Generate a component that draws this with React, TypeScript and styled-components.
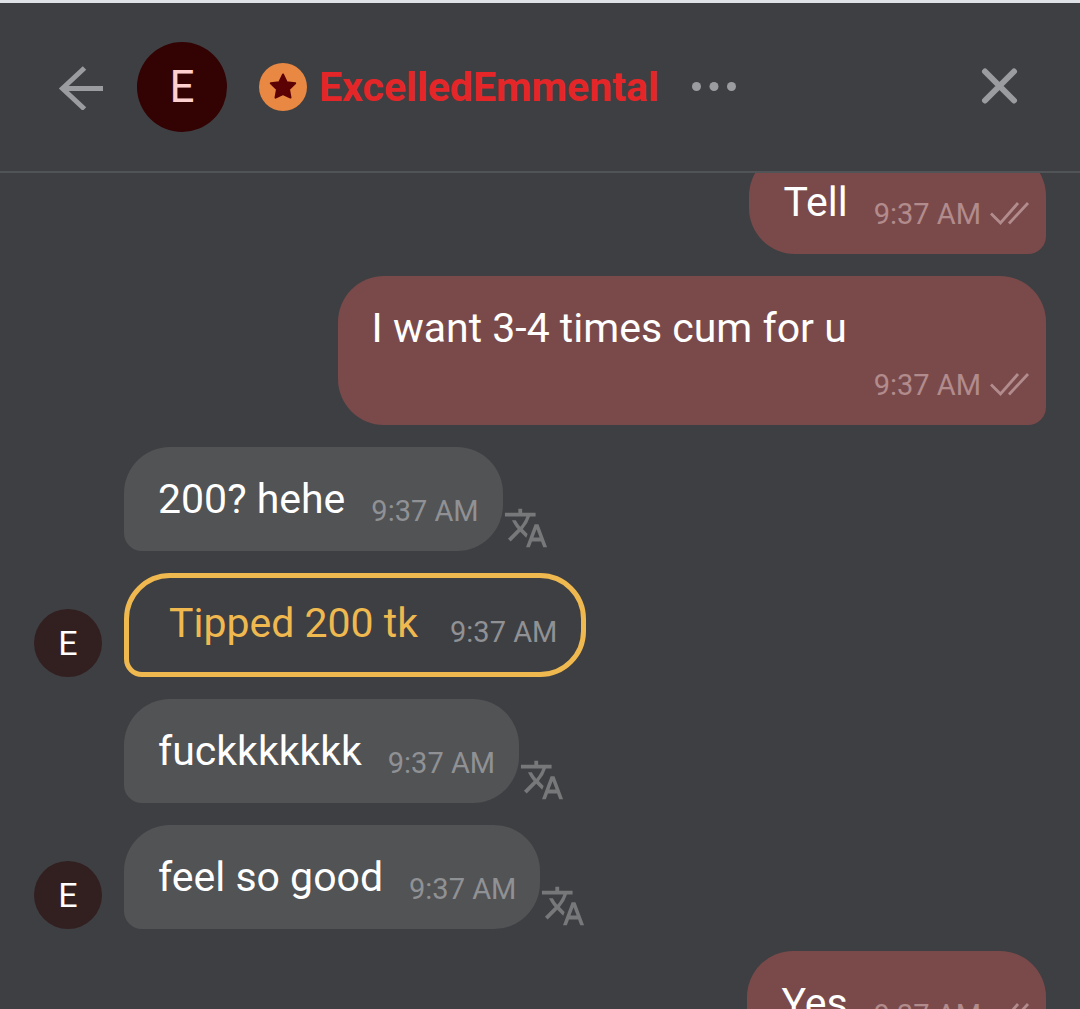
import { useLayoutEffect, useRef } from "react";
import styled, { createGlobalStyle } from "styled-components";
import { MdTranslate } from "react-icons/md";

const color = {
  page: "#3e3f42",
  strip: "#dfe3e8",
  line: "#515457",
  icon: "#9b9ca0",
  sent: "#7a4a4b",
  received: "#525355",
  tip: "#f0b94f",
};

const GlobalStyle = createGlobalStyle`
  * { box-sizing: border-box; }
  body {
    margin: 0;
    background: ${color.page};
    font-family: Roboto, "Liberation Sans", sans-serif;
  }
`;

const Screen = styled.main`
  display: flex;
  flex-direction: column;
  height: 100vh;
  border-top: 3px solid ${color.strip};
`;

const Header = styled.header`
  display: flex;
  align-items: center;
  flex: none;
  height: 170px;
  padding: 0 60px 0 58px;
  border-bottom: 2px solid ${color.line};
`;

const IconButton = styled.button`
  display: flex;
  flex: none;
  padding: 0;
  border: 0;
  background: none;
  color: ${color.icon};
  cursor: pointer;
`;

const CloseButton = styled(IconButton)`
  margin-left: auto;
`;

const Avatar = styled.span<{ $large?: boolean }>`
  display: flex;
  flex: none;
  align-items: center;
  justify-content: center;
  width: ${(p) => (p.$large ? 90 : 68)}px;
  height: ${(p) => (p.$large ? 90 : 68)}px;
  border-radius: 50%;
  background: ${(p) => (p.$large ? "#330203" : "#321f20")};
  color: ${(p) => (p.$large ? "#ffd0d0" : "#ffffff")};
  font-size: ${(p) => (p.$large ? 44 : 34)}px;
`;

const HeaderAvatar = styled(Avatar)`
  margin: 0 32px 0 33px;
`;

const UserName = styled.h1`
  margin: 0 32px 0 12px;
  color: #e52629;
  font-size: 41px;
  font-weight: 700;
  line-height: 48px;
`;

const Messages = styled.ol`
  display: flex;
  flex: 1;
  flex-direction: column;
  gap: 22px;
  min-height: 0;
  margin: 0;
  padding: 0 34px 22px;
  overflow-y: auto;
  scrollbar-width: none;
  list-style: none;
`;

const Row = styled.li<{ $sent?: boolean }>`
  display: flex;
  flex: none;
  align-items: flex-end;
  justify-content: ${(p) => (p.$sent ? "flex-end" : "flex-start")};
`;

const AvatarSlot = styled.span`
  display: flex;
  flex: none;
  width: 90px;
`;

const Bubble = styled.div`
  display: flex;
  flex-wrap: wrap;
  align-items: flex-end;
  gap: 9px 26px;
  max-width: 70%;
  min-height: 104px;
`;

const SentBubble = styled(Bubble)<{ $wide?: boolean }>`
  width: ${(p) => (p.$wide ? "70%" : "auto")};
  padding: 22px 16px 22px 34px;
  border-radius: 46px 46px 18px 46px;
  background: ${color.sent};
`;

const ReceivedBubble = styled(Bubble)`
  padding: 22px 24px 22px 34px;
  border-radius: 46px 46px 46px 18px;
  background: ${color.received};
`;

const TipBubble = styled(Bubble)`
  column-gap: 32px;
  padding: 18px 24px 22px 40px;
  border: 5px solid ${color.tip};
  border-radius: 46px 46px 46px 18px;
`;

const Text = styled.p<{ $tip?: boolean; $wide?: boolean }>`
  flex-basis: ${(p) => (p.$wide ? "100%" : "auto")};
  margin: 0;
  color: ${(p) => (p.$tip ? color.tip : "#ffffff")};
  font-size: 41px;
  line-height: ${(p) => (p.$tip ? 54 : 60)}px;
`;

const Meta = styled.span<{ $sent?: boolean }>`
  display: flex;
  align-items: center;
  gap: 9px;
  margin-left: auto;
  color: ${(p) => (p.$sent ? "#b28c8d" : "#909194")};
  font-size: 29px;
  line-height: 36px;
`;

const TranslateButton = styled(IconButton)`
  color: #77787a;
`;

type Message = {
  kind: "sent" | "received" | "tip";
  text: string;
  time: string;
  avatar?: boolean;
  wide?: boolean;
};

const messages: Message[] = [
  { kind: "sent", text: "Tell", time: "9:37 AM" },
  { kind: "sent", text: "I want 3-4 times cum for u", time: "9:37 AM", wide: true },
  { kind: "received", text: "200? hehe", time: "9:37 AM" },
  { kind: "tip", text: "Tipped 200 tk", time: "9:37 AM", avatar: true },
  { kind: "received", text: "fuckkkkkkk", time: "9:37 AM" },
  { kind: "received", text: "feel so good", time: "9:37 AM", avatar: true },
  { kind: "sent", text: "Yes", time: "9:37 AM" },
];

const BackIcon = () => (
  <svg width="46" height="46" viewBox="0 0 46 46" fill="none" stroke="currentColor" strokeWidth="5" aria-hidden="true">
    <path d="M45 24.500H4M26.500 4L4.500 24.500L26.500 45" />
  </svg>
);

const StarBadge = () => (
  <svg width="48" height="48" viewBox="0 0 48 48" role="img" aria-label="Star member">
    <circle cx="24" cy="24" r="24" fill="#e98842" />
    <path
      d="M24 11.500L27.700 19.200L36.200 20.300L30 26.200L31.500 34.600L24 31L16.500 34.600L18 26.200L11.800 20.300L20.300 19.200Z"
      fill="#5c0204"
      stroke="#5c0204"
      strokeWidth="2"
      strokeLinejoin="round"
    />
  </svg>
);

const MoreIcon = () => (
  <svg width="46" height="46" viewBox="0 0 46 46" fill="currentColor" aria-hidden="true">
    <circle cx="5.500" cy="22.500" r="4.500" />
    <circle cx="23" cy="22.500" r="4.500" />
    <circle cx="40.500" cy="22.500" r="4.500" />
  </svg>
);

const CloseIcon = () => (
  <svg width="40" height="40" viewBox="0 0 40 40" fill="none" stroke="currentColor" strokeWidth="6" strokeLinecap="round" aria-hidden="true">
    <path d="M5 4.500L34 33.500M34 4.500L5 33.500" />
  </svg>
);

const ReadIcon = () => (
  <svg width="40" height="24" viewBox="0 0 40 24" fill="none" stroke="currentColor" strokeWidth="2.800" role="img" aria-label="Read">
    <path d="M1 11.500L10.500 21L28 1M19 21.500L38 1" />
  </svg>
);

function MessageRow({ kind, text, time, avatar, wide }: Message) {
  if (kind === "sent") {
    return (
      <Row $sent>
        <SentBubble $wide={wide}>
          <Text $wide={wide}>{text}</Text>
          <Meta $sent>
            <time>{time}</time>
            <ReadIcon />
          </Meta>
        </SentBubble>
      </Row>
    );
  }
  const Body = kind === "tip" ? TipBubble : ReceivedBubble;
  return (
    <Row>
      <AvatarSlot>{avatar && <Avatar>E</Avatar>}</AvatarSlot>
      <Body>
        <Text $tip={kind === "tip"}>{text}</Text>
        <Meta>
          <time>{time}</time>
        </Meta>
      </Body>
      {kind === "received" && (
        <TranslateButton type="button" aria-label="Translate message">
          <MdTranslate size={46} />
        </TranslateButton>
      )}
    </Row>
  );
}

export default function App() {
  const list = useRef<HTMLOListElement>(null);

  useLayoutEffect(() => {
    if (list.current) list.current.scrollTop = 23;
  }, []);

  return (
    <>
      <GlobalStyle />
      <Screen>
        <Header>
          <IconButton type="button" aria-label="Back">
            <BackIcon />
          </IconButton>
          <HeaderAvatar $large>E</HeaderAvatar>
          <StarBadge />
          <UserName>ExcelledEmmental</UserName>
          <IconButton type="button" aria-label="More options">
            <MoreIcon />
          </IconButton>
          <CloseButton type="button" aria-label="Close">
            <CloseIcon />
          </CloseButton>
        </Header>
        <Messages ref={list}>
          {messages.map((message) => (
            <MessageRow key={message.text} {...message} />
          ))}
        </Messages>
      </Screen>
    </>
  );
}
